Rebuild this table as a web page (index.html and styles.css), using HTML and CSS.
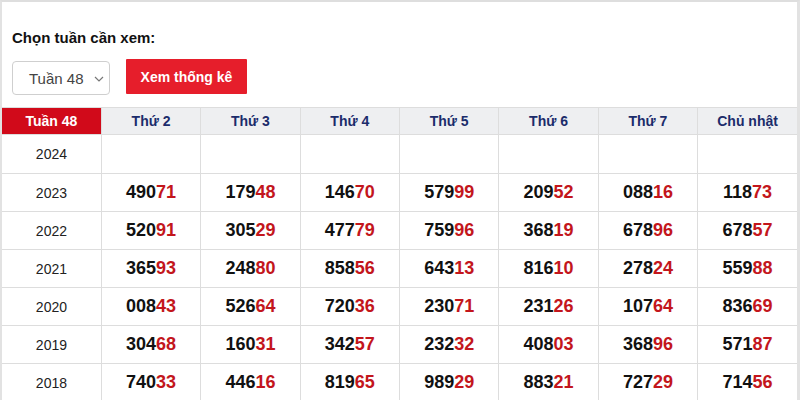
FILE: index.html
```html
<!DOCTYPE html>
<html lang="vi">
<head>
<meta charset="utf-8">
<title>Thống kê tuần</title>
<link rel="stylesheet" href="styles.css">
</head>
<body>
<div class="frame">
  <div class="controls">
    <div class="label">Chọn tuần cần xem:</div>
    <div class="row">
      <div class="select">
        <span>Tuần 48</span>
        <svg class="chev" width="10" height="6" viewBox="0 0 10 6"><path d="M1 1 L5 5 L9 1" fill="none" stroke="#777" stroke-width="1.2"/></svg>
      </div>
      <button class="btn">Xem thống kê</button>
    </div>
  </div>
  <table class="stats">
    <thead>
      <tr>
        <th class="week">Tuần 48</th>
        <th>Thứ 2</th><th>Thứ 3</th><th>Thứ 4</th><th>Thứ 5</th><th>Thứ 6</th><th>Thứ 7</th><th>Chủ nhật</th>
      </tr>
    </thead>
    <tbody>
      <tr class="first"><td class="yr">2024</td><td></td><td></td><td></td><td></td><td></td><td></td><td></td></tr>
      <tr><td class="yr">2023</td>
        <td class="n">490<span>71</span></td><td class="n">179<span>48</span></td><td class="n">146<span>70</span></td><td class="n">579<span>99</span></td><td class="n">209<span>52</span></td><td class="n">088<span>16</span></td><td class="n">118<span>73</span></td></tr>
      <tr><td class="yr">2022</td>
        <td class="n">520<span>91</span></td><td class="n">305<span>29</span></td><td class="n">477<span>79</span></td><td class="n">759<span>96</span></td><td class="n">368<span>19</span></td><td class="n">678<span>96</span></td><td class="n">678<span>57</span></td></tr>
      <tr><td class="yr">2021</td>
        <td class="n">365<span>93</span></td><td class="n">248<span>80</span></td><td class="n">858<span>56</span></td><td class="n">643<span>13</span></td><td class="n">816<span>10</span></td><td class="n">278<span>24</span></td><td class="n">559<span>88</span></td></tr>
      <tr><td class="yr">2020</td>
        <td class="n">008<span>43</span></td><td class="n">526<span>64</span></td><td class="n">720<span>36</span></td><td class="n">230<span>71</span></td><td class="n">231<span>26</span></td><td class="n">107<span>64</span></td><td class="n">836<span>69</span></td></tr>
      <tr><td class="yr">2019</td>
        <td class="n">304<span>68</span></td><td class="n">160<span>31</span></td><td class="n">342<span>57</span></td><td class="n">232<span>32</span></td><td class="n">408<span>03</span></td><td class="n">368<span>96</span></td><td class="n">571<span>87</span></td></tr>
      <tr><td class="yr">2018</td>
        <td class="n">740<span>33</span></td><td class="n">446<span>16</span></td><td class="n">819<span>65</span></td><td class="n">989<span>29</span></td><td class="n">883<span>21</span></td><td class="n">727<span>29</span></td><td class="n">714<span>56</span></td></tr>
    </tbody>
  </table>
</div>
</body>
</html>
```
FILE: styles.css
```css
html, body {
  margin: 0;
  padding: 0;
  background: #fff;
}
body {
  font-family: "Liberation Sans", Arial, sans-serif;
  color: #111;
}
.frame {
  height: 398px;
  overflow: hidden;
  border-top: 2px solid #dedede;
  border-left: 2px solid #e2e2e2;
  border-right: 3px solid #e2e2e2;
}
.controls {
  padding: 27px 10px 0;
}
.label {
  font-size: 15px;
  font-weight: bold;
  line-height: 18px;
  color: #111;
}
.row {
  display: flex;
  align-items: center;
  gap: 16px;
  margin-top: 12px;
  height: 36px;
}
.select {
  box-sizing: border-box;
  width: 98px;
  height: 34px;
  border: 1px solid #cfcfcf;
  border-radius: 4px;
  display: flex;
  align-items: center;
  justify-content: space-between;
  padding: 0 5px 0 16px;
  font-size: 15px;
  color: #444;
  margin-top: 2px;
}
.chev {
  display: block;
  margin-top: 1px;
}
.btn {
  box-sizing: border-box;
  width: 121px;
  height: 35px;
  border: 0;
  border-radius: 1px;
  background: #e61e2b;
  color: #fff;
  font-family: "Liberation Sans", Arial, sans-serif;
  font-size: 14px;
  font-weight: bold;
  padding: 0;
  margin-top: -1px;
}
.stats {
  margin-top: 12px;
  width: 100%;
  table-layout: fixed;
  border-collapse: collapse;
}
.stats th, .stats td {
  border: 1px solid #dddddd;
  text-align: center;
  padding: 0;
}
.stats tr > :first-child { border-left: 0; }
.stats tr > :last-child { border-right: 0; }
.stats th {
  height: 26px;
  background: #eeeff1;
  color: #1b2c6b;
  font-size: 14px;
  font-weight: bold;
}
.stats th.week {
  background: #d10a1a;
  color: #fff;
}
.stats td {
  height: 38px;
  box-sizing: border-box;
}
.stats tr.first td {
  height: 39px;
}
.stats td.yr {
  font-size: 14px;
  color: #222;
}
.stats td.n {
  font-size: 18px;
  font-weight: bold;
  color: #111;
}
.stats td.n span {
  color: #c3161c;
}
```
